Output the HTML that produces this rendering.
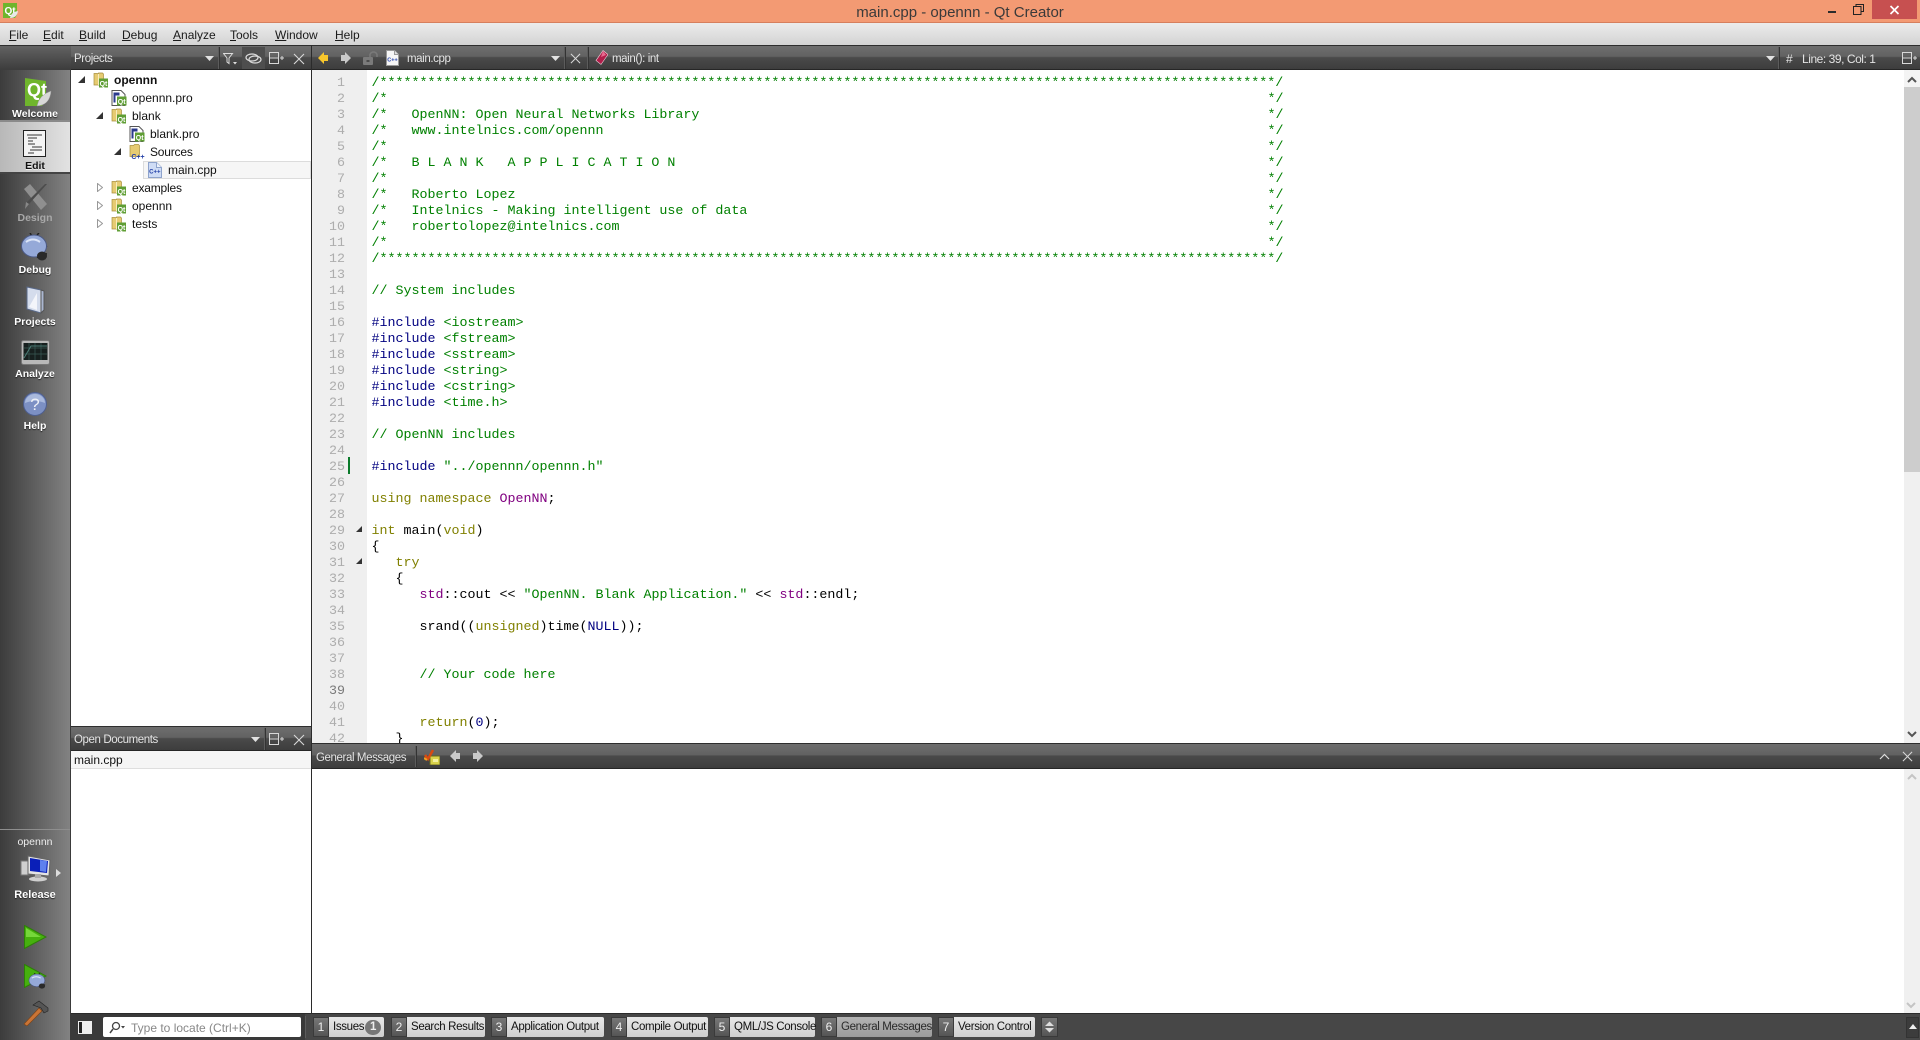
<!DOCTYPE html>
<html><head><meta charset="utf-8"><title>main.cpp - opennn - Qt Creator</title>
<style>
html,body{margin:0;padding:0;width:1920px;height:1040px;overflow:hidden;background:#fff}
body{position:relative;font-family:"Liberation Sans",sans-serif;font-size:12px;color:#111}
.a,.t,.lb,.m,svg.i{position:absolute}
.t{white-space:nowrap;height:18px;line-height:18px}
.tb{position:absolute;background:linear-gradient(#6e6e6e 0,#626262 45%,#4a4a4a 50%,#3d3d3d 100%);border-top:1px solid #2e2e2e;border-bottom:1px solid #262626;box-sizing:border-box}
.w{color:#e4e4e4;font-size:11.5px;letter-spacing:-.4px}
.sep{position:absolute;width:1px;background:#5c5c5c;border-right:1px solid #333}
.m{top:26px;line-height:18px;font-size:12px;color:#1a1a1a}
.lb{width:70px;left:0;text-align:center;font-weight:bold;font-size:10.5px;line-height:14px;color:#fff;text-shadow:0 1px 1px #222}
pre{position:absolute;margin:0;font-family:"Liberation Mono",monospace;font-size:13.333px;line-height:16px;color:#000}
#code{left:371.5px;top:76px;height:668px;width:1530px;overflow:hidden;color:#000}
#nums{left:312px;top:76px;width:33px;height:668px;overflow:hidden;text-align:right;color:#adadad}
.c{color:#008000}.p{color:#000080}.k{color:#808000}.u{color:#800080}.o{color:#000}
.e{position:absolute;left:896px;font-style:normal;color:#008000}
.nb{position:absolute;top:1017px;height:20px;width:16px;background:linear-gradient(#777,#555);border:1px solid #3a3a3a;box-sizing:border-box;color:#eee;text-align:center;line-height:19px;font-size:12px}
.lbl{position:absolute;top:1017px;height:20px;background:linear-gradient(#e8e8e8,#cfcfcf);color:#111;line-height:21px;font-size:11.5px;letter-spacing:-.35px;padding-left:4px;box-sizing:border-box;white-space:nowrap;border-radius:0 2px 2px 0}
</style></head><body>
<svg width="0" height="0" style="position:absolute"><defs>
<symbol id="fq" viewBox="0 0 16 16"><path d="M1 1.500h3.500l1 1v-1.500h4l1 1v11H1z" fill="#e6cb72" stroke="#a98f3c" stroke-width=".7"/><path d="M5.500 2v11" stroke="#f7edbd"/><rect x="6" y="6.500" width="9" height="9" fill="#5f9e34"/><text x="10.500" y="14" font-size="7" font-weight="bold" fill="#fff" text-anchor="middle" font-family="Liberation Sans">Qt</text></symbol>
<symbol id="pro" viewBox="0 0 16 16"><path d="M1 .5h9l4 4v11H1z" fill="#fff" stroke="#555"/><rect x="2.500" y="2.500" width="6" height="3" fill="#2b3a8c"/><rect x="2.500" y="5.500" width="2" height="7" fill="#2b3a8c"/><rect x="6" y="6.500" width="9.500" height="9" fill="#5f9e34"/><text x="10.700" y="14" font-size="7" font-weight="bold" fill="#fff" text-anchor="middle" font-family="Liberation Sans">Qt</text></symbol>
<symbol id="cpp" viewBox="0 0 14 16"><path d="M.5 .5h8l5 5v10H.5z" fill="#cfdcf5" stroke="#8ea3cc"/><path d="M8.500 .5v5h5" fill="#eef2fb" stroke="#8ea3cc"/><text x="6.800" y="11.500" font-size="6" font-weight="bold" fill="#2340a8" text-anchor="middle" font-family="Liberation Sans">C++</text></symbol>
<symbol id="spl" viewBox="0 0 15 14"><path d="M.5 .5h9v11h-9zM.5 6h9" fill="none" stroke="#d8d8d8"/><path d="M11 6h4M13 4v4" stroke="#d8d8d8"/></symbol>
<symbol id="cl" viewBox="0 0 12 12"><path d="M1 1l10 10M11 1L1 11" stroke="#d8d8d8" stroke-width="1.100"/></symbol>
<symbol id="dn" viewBox="0 0 9 5"><path d="M0 0h9L4.500 5z" fill="#e2e2e2"/></symbol>
<symbol id="bug" viewBox="0 0 30 30"><path d="M17 24l5 2M21 20l6 1M22 15l5-2M12 3l-2-3M17 2l2-2" stroke="#222" stroke-width="1.500" fill="none"/><ellipse cx="14" cy="13" rx="12.500" ry="11" fill="#95a9d8" stroke="#4c5a86"/><path d="M6 9q7-5 14 0" stroke="#dbe4f7" stroke-width="2" fill="none"/><ellipse cx="22" cy="23" rx="5" ry="4.500" fill="#2a2a2a"/></symbol>
</defs></svg>

<!-- title bar -->
<div class="a" style="left:0;top:0;width:1920px;height:23px;background:#f39a73;border-bottom:1px solid #d67f5d;box-sizing:border-box"></div>
<svg class="i" style="left:3px;top:3px" width="15" height="16" viewBox="0 0 15 16"><path d="M0 0h14v12l-2 3H0z" fill="#6fb52c"/><text x="1.500" y="11" font-size="10" font-weight="bold" fill="#fff" font-family="Liberation Sans">Qt</text><path d="M7 15q1-6 8-7-1 7-8 7z" fill="#e8e8e8"/></svg>
<div class="a" style="left:760px;width:400px;top:3px;text-align:center;font-size:15px;line-height:19px;color:#3a3a3a">main.cpp - opennn - Qt Creator</div>
<div class="a" style="left:1828px;top:11px;width:8px;height:2px;background:#2b2b2b"></div>
<svg class="i" style="left:1853px;top:4px" width="11" height="11" viewBox="0 0 11 11"><path d="M3 2.500V.5h7.500v7H8M.5 2.500h7.500v8H.5z" fill="none" stroke="#222"/></svg>
<div class="a" style="left:1872px;top:0;width:45px;height:19px;background:#c75050"></div>
<svg class="i" style="left:1889px;top:5px" width="11" height="10" viewBox="0 0 11 10"><path d="M1.500 1l8 8M9.500 1l-8 8" stroke="#fff" stroke-width="1.700"/></svg>

<!-- menu bar -->
<div class="a" style="left:0;top:23px;width:1920px;height:23px;background:linear-gradient(#ececec,#d2d2d2)"></div>
<div class="m" style="left:9px"><u>F</u>ile</div>
<div class="m" style="left:43px"><u>E</u>dit</div>
<div class="m" style="left:79px"><u>B</u>uild</div>
<div class="m" style="left:122px"><u>D</u>ebug</div>
<div class="m" style="left:173px"><u>A</u>nalyze</div>
<div class="m" style="left:230px"><u>T</u>ools</div>
<div class="m" style="left:275px"><u>W</u>indow</div>
<div class="m" style="left:335px"><u>H</u>elp</div>

<!-- sidebar -->
<div class="a" style="left:0;top:45px;width:71px;height:995px;background:linear-gradient(90deg,#3c3c3c,#828282);border-right:1px solid #3a3a3a;box-sizing:border-box"></div>
<div class="a" style="left:0;top:45px;width:71px;height:25px;background:linear-gradient(#626262,#3c3c3c);border-top:1px solid #2e2e2e;box-sizing:border-box"></div>
<div class="a" style="left:0;top:120px;width:70px;height:2px;background:#8a8a8a"></div>
<div class="a" style="left:0;top:122px;width:70px;height:50px;background:linear-gradient(90deg,#b8b8b8,#e2e2e2)"></div>
<div class="a" style="left:0;top:172px;width:70px;height:2px;background:#444"></div>
<div class="a" style="left:0;top:829px;width:70px;height:1px;background:#8e8e8e"></div>

<svg class="i" style="left:24px;top:77px" width="28" height="31" viewBox="0 0 28 31"><path d="M1 1l21 3v19l-4 6H1z" fill="#6fb52c"/><text x="3" y="19" font-size="18" font-weight="bold" fill="#fff" font-family="Liberation Sans">Qt</text><path d="M13 29q2-11 14-15-1 14-14 15z" fill="#d8d8d8" stroke="#999" stroke-width=".5"/></svg>
<div class="lb" style="top:107px">Welcome</div>
<svg class="i" style="left:23px;top:130px" width="23" height="27" viewBox="0 0 23 27"><rect x=".5" y=".5" width="22" height="26" fill="#f4f4f4" stroke="#222" stroke-width="1"/><path d="M4 5h15M5 8h9M5 11h5M5 14h7M9 17h10M7 20h12M5 23h6" stroke="#333" stroke-width="1"/></svg>
<div class="lb" style="top:159px;color:#111;text-shadow:0 1px 0 #eee">Edit</div>
<svg class="i" style="left:21px;top:183px" width="28" height="29" viewBox="0 0 28 29"><path d="M3 6l6-5 17 20-6 6z" fill="#8f8f8f"/><path d="M26 1L8 21l-4 5 1-6L24 1z" fill="#4c4c4c"/><path d="M4 26l4-5-3-2z" fill="#888"/></svg>
<div class="lb" style="top:211px;color:#a8a8a8;text-shadow:none">Design</div>
<svg class="i" style="left:20px;top:233px" width="30" height="30"><use href="#bug"/></svg>
<div class="lb" style="top:263px">Debug</div>
<svg class="i" style="left:25px;top:285px" width="20" height="29" viewBox="0 0 20 29"><path d="M2 2l14 3v23L2 24z" fill="#d4dcec" stroke="#5a6a8a"/><path d="M16 5l3 1v19l-3 3z" fill="#aab6d0" stroke="#555"/><path d="M4 22L12 8v17z" fill="#f3f5fa"/></svg>
<div class="lb" style="top:315px">Projects</div>
<svg class="i" style="left:21px;top:340px" width="29" height="25" viewBox="0 0 29 25"><rect x=".5" y=".5" width="28" height="24" rx="2" fill="#b8b8b8" stroke="#777"/><rect x="2.500" y="3" width="24" height="17" fill="#17201f"/><path d="M8 3v17M14 3v17M20 3v17M3 8h23M3 14h23" stroke="#3a5a56" stroke-width=".7"/><path d="M3 18L10 6h16" stroke="#4b7d76" fill="none"/></svg>
<div class="lb" style="top:367px">Analyze</div>
<svg class="i" style="left:23px;top:392px" width="24" height="24" viewBox="0 0 24 24"><circle cx="12" cy="12" r="11.500" fill="#7c90c4" stroke="#4e5f90"/><path d="M2 11a10 9 0 0 1 20 0q-10-4-20 0z" fill="#a9b9dd"/><text x="12" y="18" font-size="17" fill="#eef1f8" text-anchor="middle" font-family="Liberation Sans">?</text></svg>
<div class="lb" style="top:419px">Help</div>

<div class="lb" style="top:835px;font-weight:normal;font-size:10.500px;color:#eee;text-shadow:none">opennn</div>
<svg class="i" style="left:20px;top:854px" width="31" height="28" viewBox="0 0 31 28"><rect x="1" y="7" width="8" height="14" fill="#cfcfcf" stroke="#777"/><path d="M8 2l22 4-1 16-21-2z" fill="#e4e4e4" stroke="#666"/><path d="M10 4l18 3-1 12-17-2z" fill="#0a1fb8"/><path d="M20 6l7 1-1 11-6-1z" fill="#5e80ee"/><ellipse cx="18" cy="25" rx="9" ry="2.500" fill="#cfcfcf"/><rect x="15" y="20" width="6" height="4" fill="#aaa"/></svg>
<svg class="i" style="left:56px;top:869px" width="5" height="8" viewBox="0 0 5 8"><path d="M0 0l5 4-5 4z" fill="#ddd"/></svg>
<div class="lb" style="top:888px;font-size:11px">Release</div>
<svg class="i" style="left:24px;top:925px" width="23" height="24" viewBox="0 0 23 24"><path d="M.5 .5L22 12 .5 23.500z" fill="#46b00e" stroke="#2d7f08"/><path d="M2 3l15 9H2z" fill="#76d73a"/></svg>
<svg class="i" style="left:24px;top:964px" width="23" height="24" viewBox="0 0 23 24"><path d="M.5 .5L22 12 .5 23.500z" fill="#46b00e" stroke="#2d7f08"/></svg>
<svg class="i" style="left:28px;top:973px" width="19" height="17" viewBox="0 0 30 30" preserveAspectRatio="none"><use href="#bug"/></svg>
<svg class="i" style="left:22px;top:1000px" width="27" height="26" viewBox="0 0 27 26"><path d="M2 24L17 8l3 3L5 26z" fill="#c97436" stroke="#7d4418" stroke-width=".7"/><path d="M11 5l6-4 9 7v3l-4 2-3-5z" fill="#555" stroke="#222" stroke-width=".6"/></svg>

<!-- left panels -->
<div class="a" style="left:71px;top:70px;width:240px;height:943px;background:#fff"></div>
<div class="tb" style="left:71px;top:45px;width:241px;height:25px"></div>
<div class="t w" style="left:74px;top:50px">Projects</div>
<svg class="i" style="left:205px;top:56px" width="9" height="5"><use href="#dn"/></svg>
<div class="sep" style="left:218px;top:47px;height:22px"></div>
<div class="a" style="left:242px;top:47px;width:23px;height:22px;background:#4e4e4e"></div>
<svg class="i" style="left:223px;top:53px" width="14" height="12" viewBox="0 0 14 12"><path d="M.5 .5h9L6 5v5.500L4 9V5z" fill="none" stroke="#ddd"/><path d="M10 9h4l-2 2.500z" fill="#ddd"/></svg>
<svg class="i" style="left:245px;top:53px" width="17" height="11" viewBox="0 0 17 11"><ellipse cx="7" cy="4.500" rx="6" ry="3.500" fill="none" stroke="#ddd" stroke-width="1.200"/><ellipse cx="10" cy="6.500" rx="6" ry="3.500" fill="none" stroke="#ddd" stroke-width="1.200"/></svg>
<svg class="i" style="left:269px;top:52px" width="15" height="14"><use href="#spl"/></svg>
<svg class="i" style="left:293px;top:53px" width="12" height="12"><use href="#cl"/></svg>
<div class="a" style="left:311px;top:45px;width:1px;height:995px;background:#2b2b2b"></div>

<!-- tree -->
<div class="a" style="left:143px;top:161px;width:168px;height:18px;background:#f6f6f6;border:1px solid #dcdcdc;box-sizing:border-box"></div>
<svg class="i" style="left:78px;top:76px" width="7" height="7" viewBox="0 0 7 7"><path d="M0 7l7-7v7z" fill="#333"/></svg>
<svg class="i" style="left:96px;top:112px" width="7" height="7" viewBox="0 0 7 7"><path d="M0 7l7-7v7z" fill="#333"/></svg>
<svg class="i" style="left:114px;top:148px" width="7" height="7" viewBox="0 0 7 7"><path d="M0 7l7-7v7z" fill="#333"/></svg>
<svg class="i" style="left:97px;top:183px" width="6" height="9" viewBox="0 0 6 9"><path d="M.5 .5l5 4-5 4z" fill="#fff" stroke="#999"/></svg>
<svg class="i" style="left:97px;top:201px" width="6" height="9" viewBox="0 0 6 9"><path d="M.5 .5l5 4-5 4z" fill="#fff" stroke="#999"/></svg>
<svg class="i" style="left:97px;top:219px" width="6" height="9" viewBox="0 0 6 9"><path d="M.5 .5l5 4-5 4z" fill="#fff" stroke="#999"/></svg>
<svg class="i" style="left:93px;top:72px" width="16" height="16"><use href="#fq"/></svg>
<svg class="i" style="left:111px;top:90px" width="16" height="16"><use href="#pro"/></svg>
<svg class="i" style="left:111px;top:108px" width="16" height="16"><use href="#fq"/></svg>
<svg class="i" style="left:129px;top:126px" width="16" height="16"><use href="#pro"/></svg>
<svg class="i" style="left:129px;top:144px" width="16" height="16" viewBox="0 0 16 16"><path d="M1 1.500h3.500l1-1h4l1 1v11H1z" fill="#e6cb72" stroke="#a98f3c" stroke-width=".7"/><text x="9" y="15" font-size="7" font-weight="bold" fill="#2340a8" text-anchor="middle" font-family="Liberation Sans">C++</text></svg>
<svg class="i" style="left:148px;top:162px" width="14" height="16"><use href="#cpp"/></svg>
<svg class="i" style="left:111px;top:180px" width="16" height="16"><use href="#fq"/></svg>
<svg class="i" style="left:111px;top:198px" width="16" height="16"><use href="#fq"/></svg>
<svg class="i" style="left:111px;top:216px" width="16" height="16"><use href="#fq"/></svg>
<div class="t" style="left:114px;top:71px;font-weight:bold">opennn</div>
<div class="t" style="left:132px;top:89px">opennn.pro</div>
<div class="t" style="left:132px;top:107px">blank</div>
<div class="t" style="left:150px;top:125px">blank.pro</div>
<div class="t" style="left:150px;top:143px;letter-spacing:-.2px">Sources</div>
<div class="t" style="left:168px;top:161px">main.cpp</div>
<div class="t" style="left:132px;top:179px;letter-spacing:-.2px">examples</div>
<div class="t" style="left:132px;top:197px">opennn</div>
<div class="t" style="left:132px;top:215px">tests</div>

<!-- open documents -->
<div class="tb" style="left:71px;top:726px;width:240px;height:25px"></div>
<div class="t w" style="left:74px;top:731px">Open Documents</div>
<svg class="i" style="left:251px;top:737px" width="9" height="5"><use href="#dn"/></svg>
<div class="sep" style="left:264px;top:728px;height:22px"></div>
<svg class="i" style="left:269px;top:733px" width="15" height="14"><use href="#spl"/></svg>
<svg class="i" style="left:293px;top:734px" width="12" height="12"><use href="#cl"/></svg>
<div class="a" style="left:71px;top:751px;width:240px;height:17px;background:#f5f5f5;border-bottom:1px solid #dedede"></div>
<div class="t" style="left:74px;top:751px">main.cpp</div>

<!-- editor toolbar -->
<div class="tb" style="left:312px;top:45px;width:1608px;height:25px"></div>
<svg class="i" style="left:318px;top:52px" width="10" height="12" viewBox="0 0 10 12"><path d="M6 0v3h4v6H6v3L0 6z" fill="#f7c62c"/></svg>
<svg class="i" style="left:341px;top:52px" width="10" height="12" viewBox="0 0 10 12"><path d="M4 0v3H0v6h4v3l6-6z" fill="#c9c9c9"/></svg>
<svg class="i" style="left:363px;top:51px" width="15" height="14" viewBox="0 0 15 14"><rect x="0" y="6" width="10" height="8" rx="1" fill="#7a7a7a"/><rect x="3.500" y="9" width="3" height="2" fill="#4a4a4a"/><path d="M7 6V3.500Q8 1 10.500 1T14 3.500V6" fill="none" stroke="#7a7a7a" stroke-width="1.500"/></svg>
<svg class="i" style="left:386px;top:50px" width="13" height="16" viewBox="0 0 13 16"><path d="M.5 .5h8l4 4v11H.5z" fill="#f6f6f6" stroke="#999"/><path d="M8.500 .5v4h4" fill="#ddd" stroke="#999"/><text x="6.500" y="11.500" font-size="5.500" font-weight="bold" fill="#2340a8" text-anchor="middle" font-family="Liberation Sans">C++</text></svg>
<div class="t w" style="left:407px;top:50px">main.cpp</div>
<svg class="i" style="left:551px;top:56px" width="9" height="5"><use href="#dn"/></svg>
<div class="sep" style="left:564px;top:47px;height:22px"></div>
<svg class="i" style="left:570px;top:53px" width="11" height="11"><use href="#cl"/></svg>
<div class="sep" style="left:587px;top:47px;height:22px"></div>
<svg class="i" style="left:595px;top:50px" width="13" height="15" viewBox="0 0 13 15"><path d="M8 .5l5 4-7 10-5-4z" fill="#b01e4a" stroke="#f0d8e0" stroke-width=".6"/><path d="M8 1l-2 6 5-2z" fill="#e86a90"/></svg>
<div class="t w" style="left:612px;top:50px">main(): int</div>
<svg class="i" style="left:1766px;top:56px" width="9" height="5"><use href="#dn"/></svg>
<div class="sep" style="left:1778px;top:47px;height:22px"></div>
<div class="t w" style="left:1786px;top:50px;font-size:12px">#</div>
<div class="t w" style="left:1802px;top:50px;font-size:12px;letter-spacing:-.45px">Line: 39, Col: 1</div>
<svg class="i" style="left:1902px;top:52px" width="15" height="14"><use href="#spl"/></svg>

<!-- editor -->
<div class="a" style="left:312px;top:70px;width:55px;height:674px;background:#efefef"></div>
<pre id="nums">1
2
3
4
5
6
7
8
9
10
11
12
13
14
15
16
17
18
19
20
21
22
23
24
25
26
27
28
29
30
31
32
33
34
35
36
37
38
<span style="color:#7a7a7a">39</span>
40
41
42</pre>
<div class="a" style="left:348px;top:457px;width:2px;height:17px;background:#0a7a2a"></div>
<svg class="i" style="left:356px;top:526px" width="6" height="6" viewBox="0 0 6 6"><path d="M0 6l6-6v6z" fill="#333"/></svg>
<svg class="i" style="left:356px;top:558px" width="6" height="6" viewBox="0 0 6 6"><path d="M0 6l6-6v6z" fill="#333"/></svg>
<pre id="code"><span class="c">/****************************************************************************************************************/
/*<i class="e">*/</i>
/*   OpenNN: Open Neural Networks Library<i class="e">*/</i>
/*   www.intelnics.com/opennn<i class="e">*/</i>
/*<i class="e">*/</i>
/*   B L A N K   A P P L I C A T I O N<i class="e">*/</i>
/*<i class="e">*/</i>
/*   Roberto Lopez<i class="e">*/</i>
/*   Intelnics - Making intelligent use of data<i class="e">*/</i>
/*   robertolopez@intelnics.com<i class="e">*/</i>
/*<i class="e">*/</i>
/****************************************************************************************************************/

// System includes
</span>
<span class="p">#include</span> <span class="c">&lt;iostream&gt;</span>
<span class="p">#include</span> <span class="c">&lt;fstream&gt;</span>
<span class="p">#include</span> <span class="c">&lt;sstream&gt;</span>
<span class="p">#include</span> <span class="c">&lt;string&gt;</span>
<span class="p">#include</span> <span class="c">&lt;cstring&gt;</span>
<span class="p">#include</span> <span class="c">&lt;time.h&gt;</span>

<span class="c">// OpenNN includes</span>

<span class="p">#include</span> <span class="c">"../opennn/opennn.h"</span>

<span class="k">using namespace</span> <span class="u">OpenNN</span>;

<span class="k">int</span> main(<span class="k">void</span>)
{
   <span class="k">try</span>
   {
      <span class="u">std</span>::cout &lt;&lt; <span class="c">"OpenNN. Blank Application."</span> &lt;&lt; <span class="u">std</span>::endl;

      srand((<span class="k">unsigned</span>)time(<span class="p">NULL</span>));


      <span class="c">// Your code here</span>


      <span class="k">return</span>(<span class="p">0</span>);
   }</pre>

<!-- editor scrollbar -->
<div class="a" style="left:1904px;top:70px;width:16px;height:674px;background:#f0f0f0"></div>
<div class="a" style="left:1904px;top:70px;width:16px;height:17px;background:#f4f4f4"></div>
<div class="a" style="left:1904px;top:87px;width:16px;height:385px;background:#cdcdcd"></div>
<svg class="i" style="left:1907px;top:76px" width="10" height="7" viewBox="0 0 10 7"><path d="M1 6l4-4 4 4" fill="none" stroke="#555" stroke-width="2"/></svg>
<svg class="i" style="left:1907px;top:731px" width="10" height="7" viewBox="0 0 10 7"><path d="M1 1l4 4 4-4" fill="none" stroke="#555" stroke-width="2"/></svg>

<!-- output pane -->
<div class="tb" style="left:312px;top:743px;width:1608px;height:26px"></div>
<div class="t w" style="left:316px;top:749px">General Messages</div>
<div class="sep" style="left:415px;top:746px;height:21px"></div>
<svg class="i" style="left:424px;top:749px" width="16" height="16" viewBox="0 0 16 16"><rect x="6" y="7" width="10" height="9" fill="#d9d24a" stroke="#6a6a20"/><rect x="9" y="10" width="5" height="3" fill="#f3f0a0"/><path d="M1 6l3 4 5-9" fill="none" stroke="#d94a10" stroke-width="2.500"/><path d="M0 9l3 2" stroke="#f0a020" stroke-width="2"/></svg>
<svg class="i" style="left:450px;top:750px" width="10" height="12" viewBox="0 0 10 12"><path d="M6 0v3h4v6H6v3L0 6z" fill="#c9c9c9"/></svg>
<svg class="i" style="left:473px;top:750px" width="10" height="12" viewBox="0 0 10 12"><path d="M4 0v3H0v6h4v3l6-6z" fill="#c9c9c9"/></svg>
<svg class="i" style="left:1879px;top:753px" width="11" height="7" viewBox="0 0 11 7"><path d="M1 6l4.500-4.500L10 6" fill="none" stroke="#ddd" stroke-width="1.200"/></svg>
<svg class="i" style="left:1902px;top:751px" width="11" height="11"><use href="#cl"/></svg>
<div class="a" style="left:1904px;top:769px;width:16px;height:244px;background:#f0f0f0"></div>
<svg class="i" style="left:1907px;top:773px" width="10" height="7" viewBox="0 0 10 7"><path d="M1 6l4-4 4 4" fill="none" stroke="#c4c4c4" stroke-width="2"/></svg>
<svg class="i" style="left:1906px;top:1002px" width="10" height="7" viewBox="0 0 10 7"><path d="M1 1l4 4 4-4" fill="none" stroke="#c4c4c4" stroke-width="2"/></svg>

<!-- bottom bar -->
<div class="a" style="left:71px;top:1013px;width:1849px;height:27px;background:#474747;border-top:1px solid #2b2b2b;box-sizing:border-box"></div>
<div class="a" style="left:71px;top:1014px;width:234px;height:26px;background:#3a3a3a"></div>
<svg class="i" style="left:78px;top:1021px" width="14" height="13" viewBox="0 0 14 13"><rect x="0" y="0" width="14" height="13" fill="#eee"/><rect x="1" y="1" width="3" height="11" fill="#222"/></svg>
<div class="a" style="left:103px;top:1017px;width:198px;height:20px;background:#fff;border-radius:2px"></div>
<svg class="i" style="left:109px;top:1021px" width="16" height="13" viewBox="0 0 16 13"><circle cx="7" cy="5" r="3.500" fill="none" stroke="#444" stroke-width="1.300"/><path d="M4 8l-3 4" stroke="#444" stroke-width="1.500"/><path d="M12 5h4l-2 2.500z" fill="#444"/></svg>
<div class="t" style="left:131px;top:1019px;color:#888;font-size:12px">Type to locate (Ctrl+K)</div>
<div class="a" style="left:305px;top:1016px;width:1px;height:22px;background:#5c5c5c"></div>

<div class="nb" style="left:313px">1</div><div class="lbl" style="left:329px;width:55px">Issues<span style="position:absolute;left:36px;top:3px;width:16px;height:15px;border-radius:8px;background:#777;color:#eee;text-align:center;line-height:15px;font-weight:bold">1</span></div>
<div class="nb" style="left:391px">2</div><div class="lbl" style="left:407px;width:78px">Search Results</div>
<div class="nb" style="left:491px">3</div><div class="lbl" style="left:507px;width:97px">Application Output</div>
<div class="nb" style="left:611px">4</div><div class="lbl" style="left:627px;width:81px">Compile Output</div>
<div class="nb" style="left:714px">5</div><div class="lbl" style="left:730px;width:85px">QML/JS Console</div>
<div class="nb" style="left:821px">6</div><div class="lbl" style="left:837px;width:95px;background:linear-gradient(#b4b4b4,#9c9c9c);color:#2a2a2a">General Messages</div>
<div class="nb" style="left:938px">7</div><div class="lbl" style="left:954px;width:81px">Version Control</div>
<div class="nb" style="left:1041px;width:17px"></div>
<svg class="i" style="left:1045px;top:1021px" width="9" height="12" viewBox="0 0 9 12"><path d="M0 5l4.500-4.500L9 5zM0 7l4.500 4.500L9 7z" fill="#ddd"/></svg>
<div class="a" style="left:1906px;top:1017px;width:13px;height:21px;background:#3c3c3c;border:1px solid #333;box-sizing:border-box"></div>
<svg class="i" style="left:1909px;top:1024px" width="8" height="5" viewBox="0 0 8 5"><path d="M0 5l4-5 4 5z" fill="#eee"/></svg>
</body></html>
